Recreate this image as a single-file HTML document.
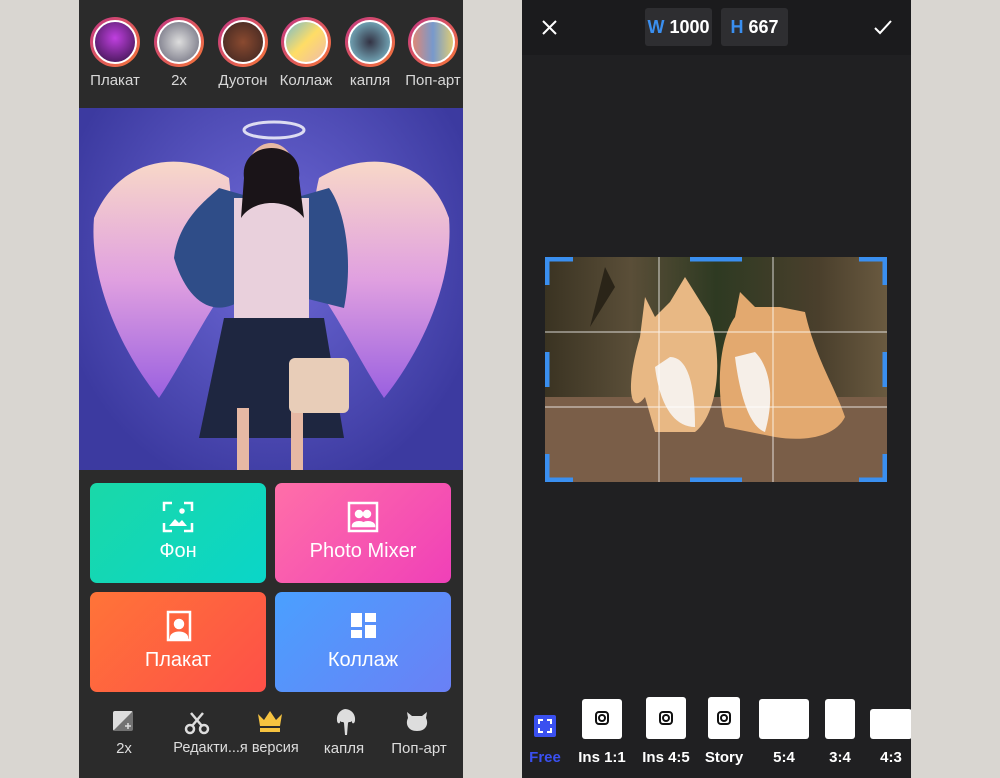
<!DOCTYPE html>
<html><head><meta charset="utf-8"><style>
*{margin:0;padding:0;box-sizing:border-box}
body{width:1000px;height:778px;background:#d9d6d1;position:relative;overflow:hidden;font-family:"Liberation Sans","DejaVu Sans",sans-serif}
.abs{position:absolute}
#L{left:79px;top:0;width:384px;height:778px;background:#2b2b2b;overflow:hidden}
.st{position:absolute;top:17px;width:50px;height:50px;border-radius:50%;background:linear-gradient(135deg,#c13584,#f77737);padding:3px}
.st div{width:100%;height:100%;border-radius:50%;border:2px solid #fff}
.sl{position:absolute;top:72px;color:#d8d8d8;font-size:15px;width:70px;text-align:center}
.card{position:absolute;border-radius:7px;color:#fff;font-size:20px;text-align:center}
.card span{position:absolute;left:0;right:0;top:57px}
.bl{position:absolute;top:740px;color:#ddd;font-size:15px;text-align:center}
#R{left:522px;top:0;width:389px;height:778px;background:#202022;overflow:hidden}
.ib{position:absolute;background:#fff;border-radius:3px}
.rl{position:absolute;top:749px;color:#fff;font-weight:bold;font-size:15px;text-align:center}
</style></head><body>
<div id="L" class="abs">
 <div class="st" style="left:11px"><div style="background:radial-gradient(circle at 50% 40%,#c040e0,#301040)"></div></div>
 <div class="st" style="left:75px"><div style="background:radial-gradient(circle,#ddd,#667)"></div></div>
 <div class="st" style="left:139px"><div style="background:radial-gradient(circle,#8a4a30,#3a2420)"></div></div>
 <div class="st" style="left:202px"><div style="background:linear-gradient(135deg,#7bc,#fd6,#eba)"></div></div>
 <div class="st" style="left:266px"><div style="background:radial-gradient(circle,#334,#8cd)"></div></div>
 <div class="st" style="left:329px"><div style="background:linear-gradient(90deg,#d87,#79c,#dc7)"></div></div>
 <div class="sl" style="left:1px">Плакат</div><div class="sl" style="left:65px">2x</div><div class="sl" style="left:129px">Дуотон</div><div class="sl" style="left:192px">Коллаж</div><div class="sl" style="left:256px">капля</div><div class="sl" style="left:319px">Поп-арт</div>
 <div class="abs" style="left:0;top:108px;width:384px;height:362px;background:radial-gradient(ellipse at 50% 40%,#6f6ad8,#3c3aa0 80%)">
  <svg width="384" height="362" style="position:absolute;left:0;top:0">
   <defs><linearGradient id="w" x1="0" y1="0" x2="0" y2="1"><stop offset="0" stop-color="#f8d8c8"/><stop offset=".5" stop-color="#e0a0e0"/><stop offset="1" stop-color="#9a60e0"/></linearGradient></defs>
   <path d="M150 70C100 40 40 50 15 110C10 170 40 240 80 290C100 260 120 220 140 190C150 150 155 110 150 70z" fill="url(#w)"/>
   <path d="M240 70C290 40 350 50 370 110C375 170 345 240 305 290C285 260 265 220 245 190C235 150 230 110 240 70z" fill="url(#w)"/>
   <ellipse cx="195" cy="22" rx="30" ry="8" fill="none" stroke="#fff" stroke-width="3" opacity=".8"/>
   <path d="M140 80C130 90 100 110 95 150C110 200 140 210 165 190L175 90z" fill="#2f4d88"/>
   <path d="M250 80C265 100 275 150 265 200L225 190L215 90z" fill="#2f4d88"/>
   <rect x="155" y="90" width="75" height="130" fill="#e9d0dc"/>
   <path d="M120 330L145 210H245L265 330z" fill="#1e2640"/>
   <rect x="158" y="300" width="12" height="62" fill="#e6b8a4"/><rect x="212" y="300" width="12" height="62" fill="#e6b8a4"/>
   <ellipse cx="192" cy="65" rx="24" ry="30" fill="#e6b8a4"/>
   <path d="M165 70C160 30 225 30 220 70L225 110C210 90 175 90 162 110z" fill="#1a1418"/>
   <rect x="210" y="250" width="60" height="55" rx="6" fill="#e8cdb8"/>
  </svg>
 </div>
 <div class="card" style="left:11px;top:483px;width:176px;height:100px;background:linear-gradient(135deg,#1ad8a8,#0ad6c8)"><svg class="abs" style="left:72px;top:18px" width="32" height="32" fill="none" stroke="#fff" stroke-width="2.5"><path d="M2 10V2h8M22 2h8v8M30 22v8h-8M10 30H2v-8"/><path d="M7 25l6-7 4 4 3-3 5 6z" fill="#fff" stroke="none"/><circle cx="20" cy="10" r="1.5" fill="#fff"/></svg><span>Фон</span></div>
 <div class="card" style="left:196px;top:483px;width:176px;height:100px;background:linear-gradient(135deg,#ff6fa8,#f040b8)"><svg class="abs" style="left:72px;top:18px" width="32" height="32" fill="none" stroke="#fff" stroke-width="2.5"><rect x="2" y="2" width="28" height="28"/><circle cx="12" cy="13" r="3" fill="#fff"/><circle cx="20" cy="13" r="3" fill="#fff"/><path d="M6 25c0-5 12-5 12 0zM15 25c0-5 12-5 12 0z" fill="#fff"/></svg><span>Photo Mixer</span></div>
 <div class="card" style="left:11px;top:592px;width:176px;height:100px;background:linear-gradient(135deg,#ff7438,#fe5048)"><svg class="abs" style="left:76px;top:18px" width="26" height="32" fill="none" stroke="#fff" stroke-width="2.5"><rect x="2" y="2" width="22" height="28"/><circle cx="13" cy="14" r="4" fill="#fff"/><path d="M5 28c0-7 16-7 16 0z" fill="#fff"/></svg><span>Плакат</span></div>
 <div class="card" style="left:196px;top:592px;width:176px;height:100px;background:linear-gradient(135deg,#4aa0ff,#6a80f5)"><svg class="abs" style="left:76px;top:21px" width="25" height="25" fill="#fff"><rect x="0" y="0" width="11" height="14"/><rect x="14" y="0" width="11" height="9"/><rect x="0" y="17" width="11" height="8"/><rect x="14" y="12" width="11" height="13"/></svg><span>Коллаж</span></div>
 <svg class="abs" style="left:34px;top:711px" width="20" height="20"><rect x="0" y="0" width="20" height="20" rx="2" fill="#ddd"/><path d="M20 0L0 20h20z" fill="#2b2b2b" opacity=".6"/><path d="M12 15h6M15 12v6" stroke="#ddd" stroke-width="1.5"/></svg>
 <svg class="abs" style="left:105px;top:709px" width="26" height="26" fill="none" stroke="#ddd" stroke-width="2.5"><circle cx="6" cy="20" r="4"/><circle cx="20" cy="20" r="4"/><path d="M8 17L19 4M18 17L7 4"/></svg>
 <svg class="abs" style="left:178px;top:710px" width="26" height="22"><path d="M1 4l6 6 6-9 6 9 6-6-2 12H3z" fill="#f6c340"/><rect x="3" y="18" width="20" height="4" fill="#f6c340"/></svg>
 <svg class="abs" style="left:255px;top:708px" width="22" height="28"><path d="M11 1a10 10 0 0 1 10 11c0 4-3 4-3 2v-1c-2 2-3 0-4 2l-1 12h-2l-1-12c-1-2-2 0-4-2v1c0 2-3 2-3-2A10 10 0 0 1 11 1z" fill="#ddd"/></svg>
 <svg class="abs" style="left:326px;top:710px" width="24" height="22"><path d="M2 2l5 4h10l5-4-1 6c3 6 0 13-9 13S0 14 3 8z" fill="#ddd"/></svg>
 <div class="bl" style="left:20px;width:50px">2x</div>
 <div class="bl" style="left:82px;width:150px;white-space:nowrap;font-size:14.5px">Редакти...я версия</div>
 <div class="bl" style="left:235px;width:60px">капля</div>
 <div class="bl" style="left:305px;width:70px">Поп-арт</div>
</div>
<div id="R" class="abs">
 <div class="abs" style="left:0;top:0;width:389px;height:55px;background:#1b1b1d"></div>
 <svg class="abs" style="left:20px;top:20px" width="15" height="15" stroke="#fff" stroke-width="2"><path d="M1 1l13 13M14 1L1 14"/></svg>
 <div class="abs" style="left:123px;top:8px;width:67px;height:38px;background:#2e2e31;border-radius:3px;color:#fff;font-weight:bold;font-size:18px;line-height:38px;text-align:center"><span style="color:#3a8ff0">W</span> 1000</div>
 <div class="abs" style="left:199px;top:8px;width:67px;height:38px;background:#2e2e31;border-radius:3px;color:#fff;font-weight:bold;font-size:18px;line-height:38px;text-align:center"><span style="color:#3a8ff0">H</span> 667</div>
 <svg class="abs" style="left:352px;top:20px" width="18" height="15" fill="none" stroke="#fff" stroke-width="2"><path d="M1 8l5 5L17 1"/></svg>
 <div class="abs" style="left:23px;top:257px;width:342px;height:225px;background:linear-gradient(90deg,#3a3322,#5a4e38 25%,#2e3a22 50%,#4a3f2c 80%,#6a5a40)">
  <svg width="342" height="225" style="position:absolute;left:0;top:0">
   <rect x="0" y="140" width="342" height="85" fill="#7a5e48"/>
   <path d="M70 30L60 10 45 70z" fill="#2a2418"/>
   <path d="M100 140C85 160 80 130 95 80L100 40 110 60 125 45 140 20 165 60C180 110 170 160 150 175H110z" fill="#e8b884"/>
   <path d="M110 110C115 150 130 170 150 170 150 120 140 100 125 100z" fill="#f6efe8"/>
   <path d="M180 170C170 130 175 80 190 60L195 35 210 50 235 50 260 55C270 100 290 130 300 160 290 180 260 185 230 180z" fill="#e3a96f"/>
   <path d="M190 100C195 140 205 170 220 175 230 140 225 110 210 95z" fill="#f6efe8"/>
  </svg>
 </div>
 <svg class="abs" style="left:23px;top:257px" width="342" height="225"><g stroke="#fff" stroke-opacity=".8" stroke-width="1"><path d="M114 0v225M228 0v225M0 75h342M0 150h342"/></g><g stroke="#3a8ff0" stroke-width="5" fill="none"><path d="M2 28V2h26M314 2h26v26M340 197v26h-26M28 223H2v-26M145 2h52M145 223h52M2 95v35M340 95v35"/></g></svg>
 <div class="abs" style="left:12px;top:715px;width:22px;height:22px;background:#3a50f0;border-radius:2px"><svg width="22" height="22" fill="none" stroke="#fff" stroke-width="2"><path d="M5 9V5h4M13 5h4v4M17 13v4h-4M9 17H5v-4"/></svg></div>
 <div class="ib" style="left:60px;top:699px;width:40px;height:40px"></div>
 <div class="ib" style="left:124px;top:697px;width:40px;height:42px"></div>
 <div class="ib" style="left:186px;top:697px;width:32px;height:42px"></div>
 <div class="ib" style="left:237px;top:699px;width:50px;height:40px"></div>
 <div class="ib" style="left:303px;top:699px;width:30px;height:40px"></div>
 <div class="ib" style="left:348px;top:709px;width:42px;height:30px"></div>
 <svg class="abs" style="left:73px;top:711px" width="14" height="14" fill="none" stroke="#111" stroke-width="2"><rect x="1" y="1" width="12" height="12" rx="3"/><circle cx="7" cy="7" r="3"/></svg>
 <svg class="abs" style="left:137px;top:711px" width="14" height="14" fill="none" stroke="#111" stroke-width="2"><rect x="1" y="1" width="12" height="12" rx="3"/><circle cx="7" cy="7" r="3"/></svg>
 <svg class="abs" style="left:195px;top:711px" width="14" height="14" fill="none" stroke="#111" stroke-width="2"><rect x="1" y="1" width="12" height="12" rx="3"/><circle cx="7" cy="7" r="3"/></svg>
 <div class="rl" style="left:0;width:46px;color:#3a50f0">Free</div>
 <div class="rl" style="left:50px;width:60px">Ins 1:1</div>
 <div class="rl" style="left:114px;width:60px">Ins 4:5</div>
 <div class="rl" style="left:172px;width:60px">Story</div>
 <div class="rl" style="left:237px;width:50px">5:4</div>
 <div class="rl" style="left:303px;width:30px">3:4</div>
 <div class="rl" style="left:352px;width:34px">4:3</div>
</div>
</body></html>
